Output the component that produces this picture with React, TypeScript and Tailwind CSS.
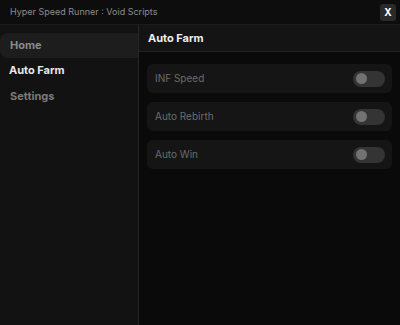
import React from "react";

const font = { fontFamily: "Inter, 'Noto Sans', sans-serif" };

function Toggle() {
  return (
    <div className="w-[32px] h-[16px] rounded-full bg-[#343434] flex items-center pl-[3px]">
      <div className="w-[11px] h-[11px] rounded-full bg-[#727272]" />
    </div>
  );
}

function Row({ label }: { label: string }) {
  return (
    <div className="h-[29px] rounded-md bg-[#151515] flex items-center justify-between pl-[8px] pr-[7px]">
      <span className="text-[10px] text-[#6c6c6c]">{label}</span>
      <Toggle />
    </div>
  );
}

export default function App() {
  return (
    <div className="w-[400px] h-[325px] bg-[#0b0b0b] flex flex-col overflow-hidden" style={font}>
      <div className="h-[25px] shrink-0 flex items-center justify-between pl-[10px] pr-[4px] bg-[#0d0d0d] border-b border-[#1c1c1c]">
        <span className="text-[9px] text-[#8c8c8c]">Hyper Speed Runner : Void Scripts</span>
        <div className="w-[16px] h-[17px] rounded-[3px] bg-[#2a2a2a] flex items-center justify-center text-[10px] font-bold text-white">X</div>
      </div>
      <div className="flex flex-1 min-h-0">
        <div className="w-[139px] shrink-0 bg-[#121212] border-r border-[#262626] pt-[8px] flex flex-col">
          <div className="h-[25px] bg-[#1d1d1d] rounded-l-lg flex items-center pl-[10px] text-[11px] font-bold text-[#8a8a8a]">Home</div>
          <div className="h-[25px] flex items-center pl-[9px] text-[11px] font-bold text-[#e8e8e8]">Auto Farm</div>
          <div className="h-[25px] flex items-center pl-[10px] pt-[2px] text-[11px] font-bold text-[#7a7a7a]">Settings</div>
        </div>
        <div className="flex-1 flex flex-col bg-[#0a0a0a]">
          <div className="h-[27px] shrink-0 bg-[#141414] border-b border-[#222] flex items-center pl-[9px] text-[11px] font-bold text-[#eeeeee]">Auto Farm</div>
          <div className="flex flex-col gap-[9px] pt-[12px] px-[8px]">
            <Row label="INF Speed" />
            <Row label="Auto Rebirth" />
            <Row label="Auto Win" />
          </div>
        </div>
      </div>
    </div>
  );
}
